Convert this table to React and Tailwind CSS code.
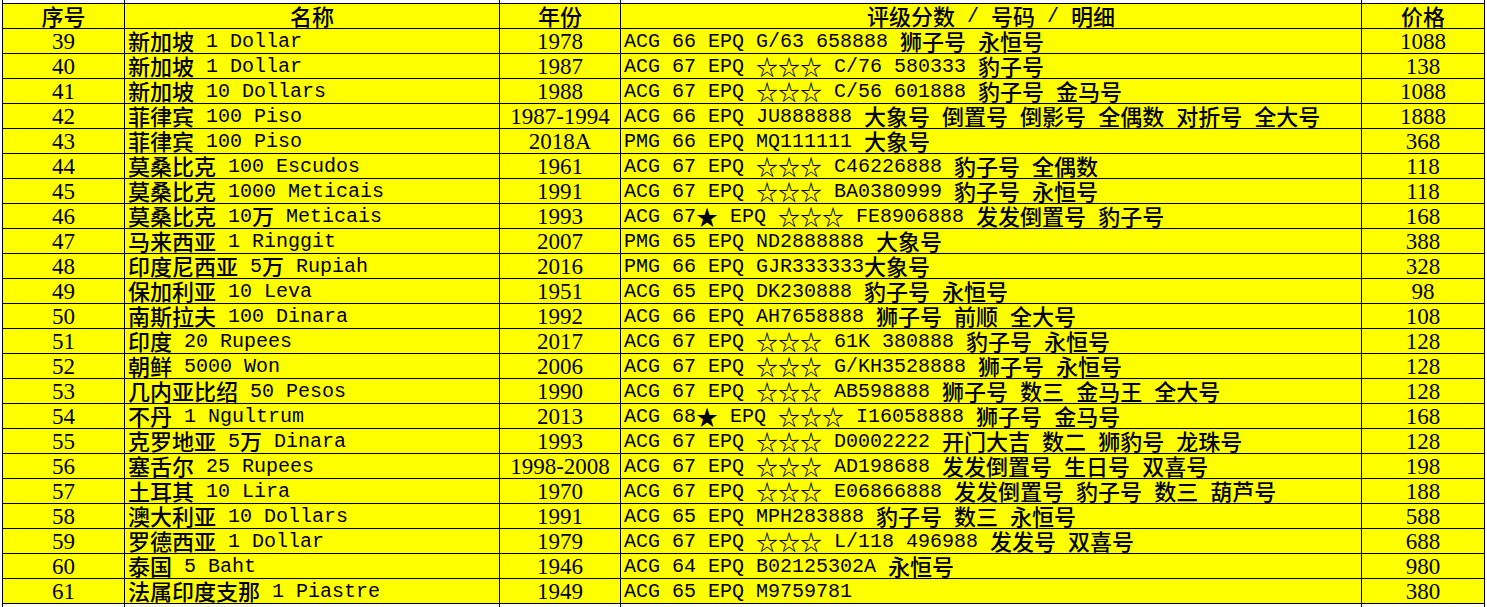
const rows = [
  ["39", "新加坡 1 Dollar", "1978", "ACG 66 EPQ G/63 658888 狮子号 永恒号", "1088"],
  ["40", "新加坡 1 Dollar", "1987", "ACG 67 EPQ ☆☆☆ C/76 580333 豹子号", "138"],
  ["41", "新加坡 10 Dollars", "1988", "ACG 67 EPQ ☆☆☆ C/56 601888 豹子号 金马号", "1088"],
  ["42", "菲律宾 100 Piso", "1987-1994", "ACG 66 EPQ JU888888 大象号 倒置号 倒影号 全偶数 对折号 全大号", "1888"],
  ["43", "菲律宾 100 Piso", "2018A", "PMG 66 EPQ MQ111111 大象号", "368"],
  ["44", "莫桑比克 100 Escudos", "1961", "ACG 67 EPQ ☆☆☆ C46226888 豹子号 全偶数", "118"],
  ["45", "莫桑比克 1000 Meticais", "1991", "ACG 67 EPQ ☆☆☆ BA0380999 豹子号 永恒号", "118"],
  ["46", "莫桑比克 10万 Meticais", "1993", "ACG 67★ EPQ ☆☆☆ FE8906888 发发倒置号 豹子号", "168"],
  ["47", "马来西亚 1 Ringgit", "2007", "PMG 65 EPQ ND2888888 大象号", "388"],
  ["48", "印度尼西亚 5万 Rupiah", "2016", "PMG 66 EPQ GJR333333大象号", "328"],
  ["49", "保加利亚 10 Leva", "1951", "ACG 65 EPQ DK230888 豹子号 永恒号", "98"],
  ["50", "南斯拉夫 100 Dinara", "1992", "ACG 66 EPQ AH7658888 狮子号 前顺 全大号", "108"],
  ["51", "印度 20 Rupees", "2017", "ACG 67 EPQ ☆☆☆ 61K 380888 豹子号 永恒号", "128"],
  ["52", "朝鲜 5000 Won", "2006", "ACG 67 EPQ ☆☆☆ G/KH3528888 狮子号 永恒号", "128"],
  ["53", "几内亚比绍 50 Pesos", "1990", "ACG 67 EPQ ☆☆☆ AB598888 狮子号 数三 金马王 全大号", "128"],
  ["54", "不丹 1 Ngultrum", "2013", "ACG 68★ EPQ ☆☆☆ I16058888 狮子号 金马号", "168"],
  ["55", "克罗地亚 5万 Dinara", "1993", "ACG 67 EPQ ☆☆☆ D0002222 开门大吉 数二 狮豹号 龙珠号", "128"],
  ["56", "塞舌尔 25 Rupees", "1998-2008", "ACG 67 EPQ ☆☆☆ AD198688 发发倒置号 生日号 双喜号", "198"],
  ["57", "土耳其 10 Lira", "1970", "ACG 67 EPQ ☆☆☆ E06866888 发发倒置号 豹子号 数三 葫芦号", "188"],
  ["58", "澳大利亚 10 Dollars", "1991", "ACG 65 EPQ MPH283888 豹子号 数三 永恒号", "588"],
  ["59", "罗德西亚 1 Dollar", "1979", "ACG 67 EPQ ☆☆☆ L/118 496988 发发号 双喜号", "688"],
  ["60", "泰国 5 Baht", "1946", "ACG 64 EPQ B02125302A 永恒号", "980"],
  ["61", "法属印度支那 1 Piastre", "1949", "ACG 65 EPQ M9759781", "380"],
]

// split text so CJK / star runs get a wider glyph, latin stays half-width mono
function Mixed({ text }) {
  const parts = text.split(/([\u2600-\u27ff\u3000-\u9fff\uff00-\uffef]+)/)
  return parts.map((p, i) =>
    i % 2 === 1 ? (
      <span key={i} className="font-['Noto_Sans_CJK_SC',sans-serif] font-medium text-[22px] leading-[24px] -translate-y-[1.5px]">{p}</span>
    ) : (
      <span key={i} className="leading-[24px] translate-y-[1px]">{p}</span>
    )
  )
}

const cell = "bg-[#FFFF00] h-[24px] flex items-center leading-[24px] text-black whitespace-pre overflow-hidden"
const num = cell + " justify-center pt-[2px] font-['Liberation_Serif',serif] text-[23px]"
const txt = cell + " pl-[3px] font-['Liberation_Mono','Noto_Sans_CJK_SC',monospace] text-[20px]"
const head = cell + " justify-center font-['Liberation_Mono','Noto_Sans_CJK_SC',monospace] text-[20px]"

export default function App() {
  return (
    <div className="w-[1487px] h-[607px] bg-white overflow-hidden">
      <div className="ml-[2px] w-[1483px] bg-black px-px grid grid-cols-[121px_374px_120px_740px_122px] grid-rows-[3px] auto-rows-[24px] gap-px">
        <div className="bg-white h-[3px]" />
        <div className="bg-white h-[3px]" />
        <div className="bg-white h-[3px]" />
        <div className="bg-white h-[3px]" />
        <div className="bg-white h-[3px]" />

        <div className={head}><Mixed text="序号" /></div>
        <div className={head}><Mixed text="名称" /></div>
        <div className={head}><Mixed text="年份" /></div>
        <div className={head}><Mixed text="评级分数 / 号码 / 明细" /></div>
        <div className={head}><Mixed text="价格" /></div>

        {rows.map((r) => (
          <div key={r[0]} className="contents">
            <div className={num}>{r[0]}</div>
            <div className={txt}><Mixed text={r[1]} /></div>
            <div className={num}>{r[2]}</div>
            <div className={txt}><Mixed text={r[3]} /></div>
            <div className={num}>{r[4]}</div>
          </div>
        ))}

        <div className="bg-white h-[3px]" />
        <div className="bg-white h-[3px]" />
        <div className="bg-white h-[3px]" />
        <div className="bg-white h-[3px]" />
        <div className="bg-white h-[3px]" />
      </div>
    </div>
  )
}
